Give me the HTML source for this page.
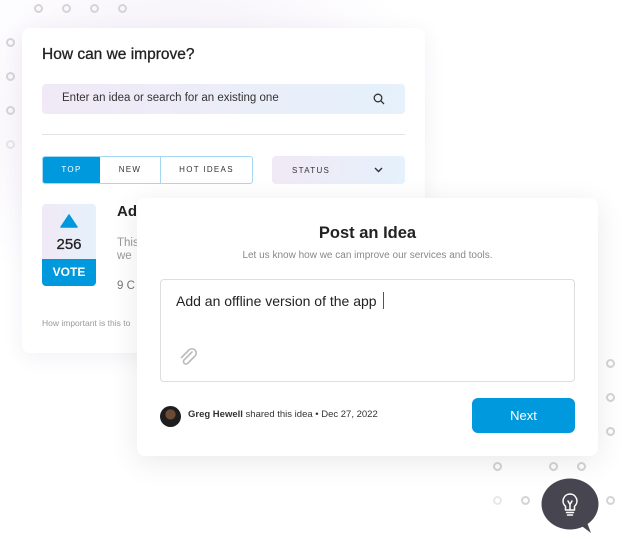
<!DOCTYPE html>
<html><head><meta charset="utf-8">
<style>
*{box-sizing:border-box;margin:0;padding:0}
body{width:627px;height:539px;overflow:hidden;background:#fff;font-family:"Liberation Sans",sans-serif;position:relative}
.glow{position:absolute;left:0;top:0;width:627px;height:539px;background:radial-gradient(ellipse 260px 200px at 180px 120px,#f1eaf6 0%,rgba(255,255,255,0) 100%)}
.dot{position:absolute;width:9px;height:9px;border:2px solid #d4d4d8;border-radius:50%}
.card{position:absolute;background:#fff;border-radius:8px}
.c1{left:22px;top:28px;width:403px;height:325px;box-shadow:0 4px 20px rgba(80,60,120,.08)}
.c2{left:137px;top:198px;width:461px;height:258px;box-shadow:0 6px 30px rgba(0,0,0,.09)}
.grad{background:linear-gradient(90deg,#f1e9f6,#e5f1fb)}
</style></head><body>
<div class="glow"></div>
<div class="dot" style="left:34px;top:4px"></div>
<div class="dot" style="left:62px;top:4px"></div>
<div class="dot" style="left:90px;top:4px"></div>
<div class="dot" style="left:118px;top:4px"></div>
<div class="dot" style="left:6px;top:38px"></div>
<div class="dot" style="left:6px;top:72px"></div>
<div class="dot" style="left:6px;top:106px"></div>
<div class="dot" style="left:6px;top:140px;border-color:#e4e4e7"></div>
<div class="dot" style="left:606px;top:359px"></div>
<div class="dot" style="left:606px;top:393px"></div>
<div class="dot" style="left:606px;top:427px"></div>
<div class="dot" style="left:493px;top:462px"></div>
<div class="dot" style="left:549px;top:462px"></div>
<div class="dot" style="left:577px;top:462px"></div>
<div class="dot" style="left:493px;top:496px;border-color:#e8e8ea"></div>
<div class="dot" style="left:521px;top:496px"></div>
<div class="dot" style="left:606px;top:496px"></div>

<div class="card c1">
 <div style="position:absolute;left:20px;top:18px;font-size:15.5px;color:#222;-webkit-text-stroke:.3px #222">How can we improve?</div>
 <div class="grad" style="position:absolute;left:20px;top:56px;width:363px;height:30px;border-radius:4px;font-size:11.5px;color:#333;padding:8px 0 0 20px">Enter an idea or search for an existing one
  <svg style="position:absolute;right:20px;top:9px" width="12" height="12" viewBox="0 0 12 12"><circle cx="5" cy="5" r="3.8" fill="none" stroke="#333" stroke-width="1.3"/><path d="M8 8l3 3" stroke="#333" stroke-width="1.3"/></svg></div>
 <div style="position:absolute;left:20px;top:106px;width:363px;height:1px;background:#e3e3e3"></div>
 <div style="position:absolute;left:20px;top:128px;width:211px;height:28px;border:1px solid #a6d8f2;border-radius:3px;display:flex;font-size:8px;letter-spacing:1.3px;color:#333;overflow:hidden">
  <div style="width:57px;background:#0099dd;color:#fff;text-align:center;line-height:26px">TOP</div>
  <div style="width:61px;text-align:center;line-height:26px;border-right:1px solid #a6d8f2">NEW</div>
  <div style="flex:1;text-align:center;line-height:26px">HOT IDEAS</div>
 </div>
 <div class="grad" style="position:absolute;left:250px;top:128px;width:133px;height:28px;border-radius:4px;font-size:8px;letter-spacing:1.3px;color:#333;padding:10px 0 0 20px">STATUS
  <svg style="position:absolute;right:22px;top:11px" width="9" height="6" viewBox="0 0 9 6"><path d="M1 1l3.5 3.5L8 1" fill="none" stroke="#333" stroke-width="1.4"/></svg></div>
 <div style="position:absolute;left:20px;top:176px;width:54px;height:82px;border-radius:4px;overflow:hidden" class="grad">
  <svg style="position:absolute;left:18px;top:10px" width="18" height="14" viewBox="0 0 18 14"><path d="M9 1L17 13H1Z" fill="#0099dd" stroke="#0099dd" stroke-width="1.5" stroke-linejoin="round"/></svg>
  <div style="position:absolute;top:32px;width:54px;text-align:center;font-size:15px;color:#222;-webkit-text-stroke:.3px #222">256</div>
  <div style="position:absolute;top:55px;width:54px;height:27px;background:#0099dd;color:#fff;text-align:center;font-size:12px;line-height:27px;font-weight:bold">VOTE</div>
 </div>
 <div style="position:absolute;left:95px;top:175px;font-size:15px;font-weight:bold;color:#222">Ad</div>
 <div style="position:absolute;left:95px;top:209px;font-size:11.5px;color:#999;line-height:13px">This<br>we</div>
 <div style="position:absolute;left:95px;top:252px;font-size:11.5px;color:#777">9 C</div>
 <div style="position:absolute;left:20px;top:290px;font-size:8.5px;color:#999">How important is this to</div>
</div>

<div class="card c2">
 <div style="position:absolute;width:461px;top:26px;text-align:center;font-size:16.5px;font-weight:bold;color:#222">Post an Idea</div>
 <div style="position:absolute;width:461px;top:52px;text-align:center;font-size:10px;color:#888">Let us know how we can improve our services and tools.</div>
 <div style="position:absolute;left:23px;top:81px;width:415px;height:103px;border:1px solid #dedede;border-radius:4px">
  <div style="position:absolute;left:15px;top:12px;font-size:14px;color:#222">Add an offline version of the app <span style="display:inline-block;width:1px;height:17px;background:#555;vertical-align:-3px;margin-left:3px"></span></div>
  <svg style="position:absolute;left:16px;top:66px" width="22" height="22" viewBox="0 0 22 22"><path d="M15 6L7 14a2.5 2.5 0 0 0 3.5 3.5L18 10a4.2 4.2 0 0 0-6-6L4.5 11.5" fill="none" stroke="#bbb" stroke-width="1.6" stroke-linecap="round"/></svg>
 </div>
 <div style="position:absolute;left:23px;top:208px;width:21px;height:21px;border-radius:50%;background:radial-gradient(circle at 50% 40%,#6b4a36 0 30%,#1e1e1e 32%)"></div>
 <div style="position:absolute;left:51px;top:211px;font-size:9.5px;color:#333"><b>Greg Hewell</b> shared this idea • Dec 27, 2022</div>
 <div style="position:absolute;left:335px;top:200px;width:103px;height:35px;border-radius:6px;background:#0099dd;color:#fff;font-size:13px;text-align:center;line-height:35px">Next</div>
</div>

<svg style="position:absolute;left:541px;top:478px" width="60" height="57" viewBox="0 0 60 57"><ellipse cx="29" cy="26" rx="28.5" ry="25.5" fill="#474650"/><path d="M38 46L50 55L45 42Z" fill="#474650"/>
<path d="M29 16a7 7 0 0 0-4.5 12.3V32h9v-3.7A7 7 0 0 0 29 16Z M25.5 34.5h7 M26.5 37h5 M27 23l2 3.5 2-3.5 M29 26.5V31" fill="none" stroke="#fff" stroke-width="1.5" stroke-linecap="round" stroke-linejoin="round"/></svg>
</body></html>
